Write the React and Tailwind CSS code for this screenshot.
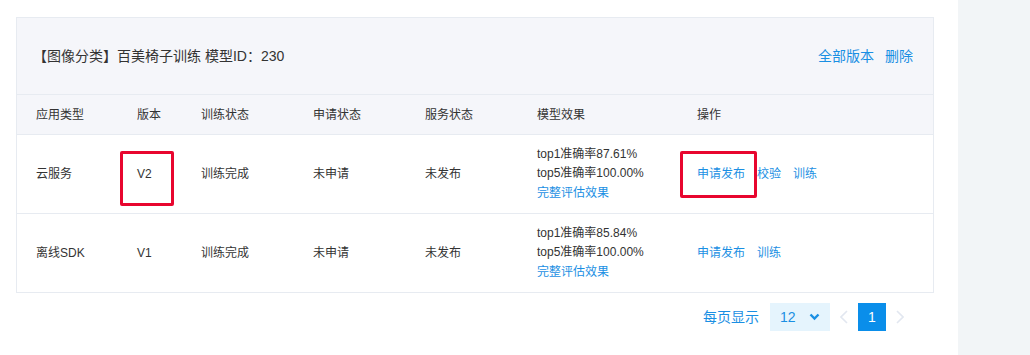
import React from 'react';

const font = { fontFamily: '"Liberation Sans", "Noto Sans CJK SC", sans-serif' };

const cols = 'grid grid-cols-[101px_64px_112px_112px_112px_160px_1fr] pl-[19px]';

const rows = [
  { type: '云服务', ver: 'V2', top1: '87.61%', top5: '100.00%', actions: ['申请发布', '校验', '训练'] },
  { type: '离线SDK', ver: 'V1', top1: '85.84%', top5: '100.00%', actions: ['申请发布', '训练'] },
];

function Chevron({ dir, className }) {
  return (
    <svg width="8" height="14" viewBox="0 0 8 14" className={className}>
      <polyline
        points={dir === 'left' ? '7,1 1,7 7,13' : '1,1 7,7 1,13'}
        fill="none"
        stroke="currentColor"
        strokeWidth="1.6"
      />
    </svg>
  );
}

export default function App() {
  return (
    <div className="relative flex h-[355px] w-[1030px] bg-white text-[#333]" style={font}>
      <div className="w-[958px] pl-4 pr-[24px] pt-[17px]">
        <div className="border border-[#e7ebf1]">
          <div className="flex h-[76px] items-center justify-between bg-[#f5f6fa] pl-4 pr-5 text-[14px]">
            <span>【图像分类】百美椅子训练 模型ID：230</span>
            <div className="flex gap-[11px] text-[#1a8fe3]">
              <span>全部版本</span>
              <span>删除</span>
            </div>
          </div>
          <div className={`${cols} h-10 items-center border-t border-[#e7ebf1] bg-[#f5f6fa] text-[12px]`}>
            <span>应用类型</span>
            <span>版本</span>
            <span>训练状态</span>
            <span>申请状态</span>
            <span>服务状态</span>
            <span>模型效果</span>
            <span>操作</span>
          </div>
          {rows.map((r) => (
            <div key={r.ver} className={`${cols} h-[79px] items-center border-t border-[#e7ebf1] text-[12px]`}>
              <span>{r.type}</span>
              <span>{r.ver}</span>
              <span>训练完成</span>
              <span>未申请</span>
              <span>未发布</span>
              <div className="flex flex-col leading-[19.5px]">
                <span>top1准确率{r.top1}</span>
                <span>top5准确率{r.top5}</span>
                <span className="text-[#1a8fe3]">完整评估效果</span>
              </div>
              <div className="flex gap-3 text-[#1a8fe3]">
                {r.actions.map((a) => (
                  <span key={a}>{a}</span>
                ))}
              </div>
            </div>
          ))}
        </div>
        <div className="mt-[10px] flex h-7 items-center justify-end pr-[30px] text-[14px] text-[#1a8fe3]">
          <span className="mr-[11px]">每页显示</span>
          <div className="flex h-7 w-[60px] items-center justify-between bg-[#e5f4fd] pl-[10px] pr-[10px]">
            <span>12</span>
            <svg width="11" height="8" viewBox="0 0 11 8">
              <polyline points="1.5,1.5 5.5,5.5 9.5,1.5" fill="none" stroke="currentColor" strokeWidth="2.4" />
            </svg>
          </div>
          <Chevron dir="left" className="ml-[10px] text-[#e2e7f0]" />
          <div className="ml-[10px] flex h-7 w-7 items-center justify-center bg-[#0a8eea] text-white">1</div>
          <Chevron dir="right" className="ml-[10px] text-[#e2e7f0]" />
        </div>
      </div>
      <div className="flex-1 bg-[#f2f5f7]" />

      <div className="absolute left-[120px] top-[151px] h-[55px] w-[54px] rounded-[2px] border-[3px] border-[#e8062f]" />
      <div className="absolute left-[680px] top-[151px] h-[47px] w-[77px] rounded-[2px] border-[3px] border-[#e8062f]" />
    </div>
  );
}
